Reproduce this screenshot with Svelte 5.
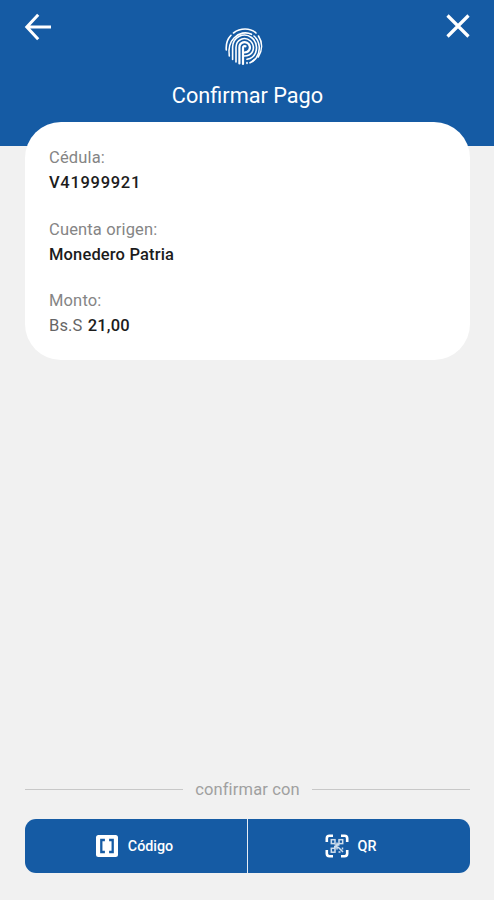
<script>
  const details = [
    { label: 'Cédula:', value: 'V41999921', wide: true },
    { label: 'Cuenta origen:', value: 'Monedero Patria' },
    { label: 'Monto:', prefix: 'Bs.S', value: '21,00' }
  ];
</script>

<div class="screen">
  <header class="header">
    <button class="nav-button" aria-label="Volver">
      <svg width="28" height="28" viewBox="0 0 28 28" fill="none" stroke="currentColor" stroke-width="3">
        <path d="M14.2 1.800 2.800 14l11.400 12.200M3 14h24" />
      </svg>
    </button>

    <div class="brand">
      <svg class="logo" width="38" height="40" viewBox="0 0 38 40" fill="none" stroke="currentColor" stroke-width="1.600" stroke-linecap="round">
        <path d="M8.500 6C15.500 .7 25 .8 31 6" />
        <path d="M33.500 9c4.200 6.500 4 14.500-.3 21" />
        <path d="M1.300 23C.8 17.500 2.500 12 6 8.300" />
        <path d="M4.300 29c-1-7 .2-13.500 4.700-18C14 5.800 21 4.500 26.500 7.300" />
        <path d="M29 9c6 5.200 7 14.500 2.500 21.500-1.700 2.500-4 4.300-6.500 5.300" />
        <path d="M7.600 32.500V20C8 9.500 19 5 26.500 10.500c6.500 5 6.500 14.500 1 19.500-1.600 1.400-3.300 2-5.500 2.300" />
        <path d="M11 35V20.500C11 12 20 9 25.500 14c4.700 4.700 3.300 11.500-1.500 14-1.600.9-3.200 1-5 1" />
        <path d="M14.400 36.500V20.500c0-5.500 6.600-7 9.400-3.300 2.700 4 .2 8.300-4.300 8.300" stroke-width="2.200" />
        <path d="M18 37V20.800c0-1.500 1.500-2 2.500-1.500" stroke-width="2.200" />
        <path d="M22 35.500v1M29 32.800l-1.500 1.200" />
      </svg>
      <h1 class="title">Confirmar Pago</h1>
    </div>

    <button class="nav-button" aria-label="Cerrar">
      <svg width="26" height="26" viewBox="0 0 26 26" fill="none" stroke="currentColor" stroke-width="3.200">
        <path d="m2.500 2.500 21 21M23.500 2.500l-21 21" />
      </svg>
    </button>
  </header>

  <main class="card">
    {#each details as item}
      <div class="detail">
        <div class="label">{item.label}</div>
        <div class="value" class:wide={item.wide}>
          {#if item.prefix}<span class="prefix">{item.prefix}</span>{/if}
          {item.value}
        </div>
      </div>
    {/each}
  </main>

  <footer class="footer">
    <div class="separator"><span>confirmar con</span></div>
    <div class="actions">
      <button class="action action-code">
        <svg width="24" height="24" viewBox="0 0 24 24">
          <rect x="1" y="1" width="22" height="22" rx="2.500" fill="#fff" />
          <path d="M9.900 6H6.300v12h3.600M14.100 6h3.600v12h-3.600" fill="none" stroke="#155ba4" stroke-width="2.300" />
        </svg>
        <span>Código</span>
      </button>
      <button class="action action-qr">
        <svg width="24" height="24" viewBox="0 0 24 24" fill="none" stroke="#fff">
          <path d="M1.800 8V4.500q0-2.700 2.700-2.700H8M16 1.800h3.500q2.700 0 2.700 2.700V8M22.200 16v3.500q0 2.700-2.700 2.700H16M8 22.200H4.500q-2.700 0-2.700-2.700V16" stroke-width="2.600" />
          <g stroke-width="1.500" opacity=".8">
            <rect x="6.300" y="5.700" width="3.700" height="3.900" />
            <rect x="14" y="5.700" width="3.700" height="3.900" />
            <rect x="6.300" y="14.300" width="3.700" height="3.900" />
            <path d="M9.500 11h5M12 8.500v7M13 13l5 5M17.500 13.500v2M13.500 18h2M9 12.800h3M14 9.500l-5 5" />
          </g>
        </svg>
        <span>QR</span>
      </button>
    </div>
  </footer>
</div>

<style>
  :global(body) {
    margin: 0;
    background: #f1f1f1;
  }

  .screen {
    display: flex;
    flex-direction: column;
    height: 100vh;
    font-family: Roboto, sans-serif;
    background: #f1f1f1;
  }

  .header {
    display: flex;
    justify-content: space-between;
    align-items: flex-start;
    box-sizing: border-box;
    height: 146px;
    flex: none;
    padding: 13px 23px 0 24px;
    color: #fff;
    background: #155ba4;
  }

  button {
    margin: 0;
    padding: 0;
    border: none;
    font-family: inherit;
    color: #fff;
    cursor: pointer;
  }

  .nav-button {
    display: flex;
    width: 28px;
    background: none;
  }

  .nav-button:last-child {
    justify-content: flex-end;
  }

  .brand {
    display: flex;
    flex-direction: column;
    align-items: center;
    padding-top: 14px;
  }

  .logo {
    margin-right: 6px;
  }

  .title {
    margin: 15px 0 0;
    font-size: 21.700px;
    font-weight: 400;
    line-height: 28px;
  }

  .card {
    box-sizing: border-box;
    height: 238px;
    margin: -24px 24px 0 25px;
    padding: 23px 24px;
    border-radius: 36px;
    background: #fff;
  }

  .detail {
    height: 71.600px;
    font-size: 16.500px;
    line-height: 25px;
    letter-spacing: 0.15px;
  }

  .label,
  .prefix {
    color: #858585;
  }

  .value {
    font-weight: 500;
    color: #1c1c1c;
  }

  .value.wide {
    letter-spacing: 0.7px;
  }

  .prefix {
    margin-right: 1px;
    font-weight: 400;
    color: #666;
  }

  .footer {
    margin: auto 24px 27px 25px;
  }

  .separator {
    display: flex;
    align-items: center;
    gap: 12px;
    margin-bottom: 19px;
    font-size: 16.500px;
    line-height: 21px;
    letter-spacing: 0.15px;
    color: #a0a0a0;
  }

  .separator::before,
  .separator::after {
    content: '';
    flex: 1;
    height: 1px;
    background: #c8c8c8;
  }

  .actions {
    display: grid;
    grid-template-columns: 1fr 1fr;
    gap: 1px;
    height: 54px;
    border-radius: 11px;
    overflow: hidden;
    background: #e6edf5;
  }

  .action {
    display: flex;
    align-items: center;
    justify-content: center;
    gap: 9px;
    font-size: 14.300px;
    font-weight: 500;
    background: #155ba4;
  }

  .action-code {
    padding-right: 4px;
  }

  .action-qr {
    padding-right: 17px;
  }
</style>
